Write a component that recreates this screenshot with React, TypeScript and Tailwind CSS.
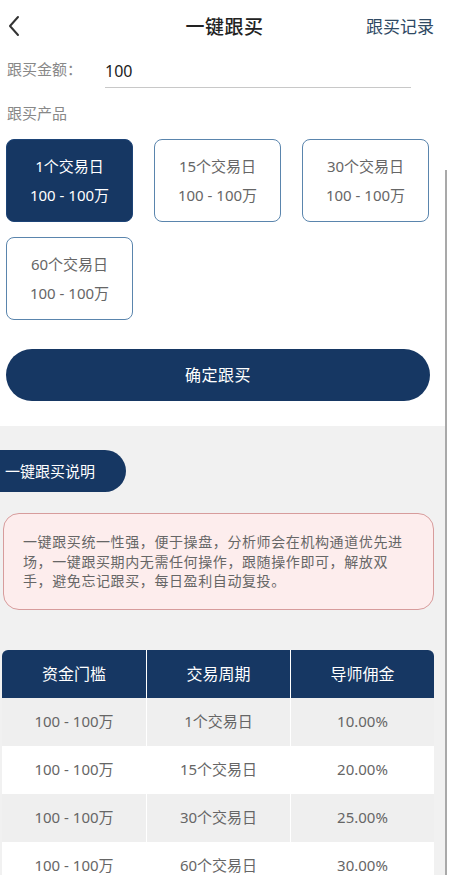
const font = { fontFamily: '"Noto Sans", "Noto Sans CJK SC", sans-serif' };

interface Product {
  days: string;
  range: string;
}

const products: Product[] = [
  { days: "1个交易日", range: "100 - 100万" },
  { days: "15个交易日", range: "100 - 100万" },
  { days: "30个交易日", range: "100 - 100万" },
  { days: "60个交易日", range: "100 - 100万" },
];

const rows = [
  ["100 - 100万", "1个交易日", "10.00%"],
  ["100 - 100万", "15个交易日", "20.00%"],
  ["100 - 100万", "30个交易日", "25.00%"],
  ["100 - 100万", "60个交易日", "30.00%"],
];

export default function App() {
  const selected = 0;

  return (
    <div
      className="relative w-[449px] h-[875px] overflow-hidden bg-white"
      style={{ fontFamily: '"Noto Sans", "Noto Sans CJK SC", sans-serif' }}
    >
      {/* header */}
      <div className="relative flex items-center justify-center h-[54px]">
        <svg
          className="absolute left-[7px] top-[15px]"
          width="14"
          height="22"
          viewBox="0 0 14 22"
          fill="none"
        >
          <polyline
            points="11,2 3,11 11,20"
            stroke="#333"
            strokeWidth="2"
            strokeLinecap="round"
            strokeLinejoin="round"
          />
        </svg>
        <span className="text-[19px] font-medium text-[#222] tracking-[0.5px]">一键跟买</span>
        <span className="absolute right-[15px] top-[15px] text-[17px] text-[#2f4a64] leading-[24px]">
          跟买记录
        </span>
      </div>

      {/* amount */}
      <div className="flex items-center pl-[7px] h-[34px]">
        <span className="w-[98px] text-[15px] text-[#888] -mt-[4px]">跟买金额：</span>
        <div className="w-[306px] h-[34px] flex items-center border-b border-[#c8c8c8] text-[16px] text-[#222]">
          100
        </div>
      </div>

      <div className="mt-[15px] pl-[7px] h-[20px] leading-[20px] text-[15px] text-[#888]">跟买产品</div>

      {/* products */}
      <div className="mt-[16px] pl-[6px] flex flex-wrap gap-x-[21px] gap-y-[15px] w-[440px]">
        {products.map((p, i) => (
          <div
            key={p.days}
            className={`w-[127px] h-[83px] rounded-[8px] border flex flex-col items-center justify-center gap-[7px] text-[15px] leading-[22px] ${
              i === selected
                ? "bg-[#163763] border-[#1d4477] text-white"
                : "bg-white border-[#5a85ad] text-[#666]"
            }`}
          >
            <span>{p.days}</span>
            <span>{p.range}</span>
          </div>
        ))}
      </div>

      <button
        className="mt-[29px] ml-[6px] w-[424px] h-[52px] rounded-full bg-[#163763] text-white text-[16px] tracking-[0.5px]"
        style={font}
      >
        确定跟买
      </button>

      {/* info section */}
      <div className="mt-[25px] bg-[#f1f1f1] pt-[24px] pb-[40px]">
        <div className="w-[126px] h-[42px] rounded-r-full bg-[#163763] flex items-center pl-[5px] text-[15px] text-white">
          一键跟买说明
        </div>

        <div className="mt-[21px] ml-[3px] w-[431px] rounded-[16px] border border-[#d79c9c] bg-[#fdeded] pl-[19px] pr-[24px] py-[18px] text-[14px] leading-[19.5px] tracking-[0.6px] text-[#666]">
          一键跟买统一性强，便于操盘，分析师会在机构通道优先进场，一键跟买期内无需任何操作，跟随操作即可，解放双手，避免忘记跟买，每日盈利自动复投。
        </div>

        <div className="mt-[40px] ml-[2px] w-[432px] rounded-t-[6px] overflow-hidden">
          <div className="grid grid-cols-3 h-[48px] bg-[#163763] text-white text-[16px]">
            {["资金门槛", "交易周期", "导师佣金"].map((h, i) => (
              <div
                key={h}
                className={`flex items-center justify-center ${i > 0 ? "border-l border-white" : ""}`}
              >
                {h}
              </div>
            ))}
          </div>
          {rows.map((r, ri) => (
            <div
              key={ri}
              className={`grid grid-cols-3 h-[48px] text-[15px] text-[#666] ${
                ri % 2 === 0 ? "bg-[#efefef]" : "bg-white"
              }`}
            >
              {r.map((c, ci) => (
                <div
                  key={ci}
                  className={`flex items-center justify-center ${ci > 0 ? "border-l border-white" : ""}`}
                >
                  {c}
                </div>
              ))}
            </div>
          ))}
        </div>
      </div>

      {/* scroll indicator */}
      <div className="absolute right-0 top-[170px] bottom-0 w-[4px] bg-white">
        <div className="w-[2px] h-full bg-[#a9a9a9]" />
      </div>
    </div>
  );
}
